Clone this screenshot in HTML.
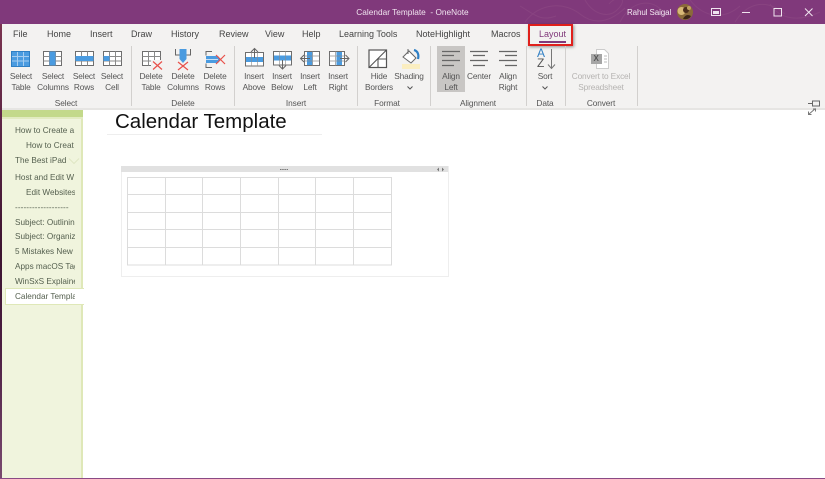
<!DOCTYPE html>
<html><head><meta charset="utf-8"><style>
html,body{margin:0;padding:0;background:#fff}
body{width:825px;height:479px;position:relative;overflow:hidden;font-family:"Liberation Sans",sans-serif;filter:blur(.3px)}
div{position:absolute;white-space:nowrap}
.tab{top:29px;font-size:9px;line-height:11px;color:#444}
.l{font-size:8.3px;letter-spacing:-.15px;line-height:11px;color:#555;text-align:center;width:50px;top:71px}
.g{font-size:8.3px;letter-spacing:-.1px;line-height:11px;color:#555;text-align:center;width:60px;top:98px}
.sep{top:46px;width:1px;height:60px;background:#d2d0ce}
.n{font-size:8.2px;line-height:11px;color:#55604f;left:15px;width:60px;overflow:hidden}
</style></head><body>
<div style="left:0;top:0;width:825px;height:24px;background:#80397b"></div>
<div style="left:0;top:24px;width:2px;height:455px;background:linear-gradient(#7a3450,#5a2444 25%,#3c1430 50%,#4a1c40 70%,#7a4a70)"></div>
<svg style="position:absolute;left:0;top:0" width="825" height="24" fill="none" stroke="#884380" stroke-width="1"><path d="M525 22C540 2 565 2 580 14S610 22 625 8M585 0c8 14 24 20 34 8s-4-12-10-4M520 6c14 8 20 16 36 10M620 22c12-24 36-24 46-6M690 0c14 18 34 20 50 6M735 22c14-22 34-22 50-8M770 4c10 16 30 18 50 8"/></svg>
<div style="left:300px;top:6px;width:225px;text-align:center;font-size:8.3px;line-height:12px;color:#f0e4ef">Calendar Template &nbsp;- OneNote</div>
<div style="left:627px;top:7px;font-size:8px;letter-spacing:-.1px;line-height:12px;color:#f3e9f2">Rahul Saigal</div>
<svg style="position:absolute;left:676px;top:3px" width="18" height="18"><circle cx="9" cy="9" r="8" fill="#8a6a3a"/><circle cx="5.500" cy="8" r="4" fill="#d8b878"/><circle cx="10" cy="7" r="3" fill="#4a2c1c"/><path d="M7 16q3-6 8-3-2 4-8 3z" fill="#3a2418"/><circle cx="13" cy="5" r="2" fill="#c0a060"/></svg>
<svg style="position:absolute;left:705px;top:3px" width="115" height="18" fill="none" stroke="#f0e4ef"><rect x="6.500" y="5.500" width="9" height="7"/><path d="M8 8h6v3H8z" fill="#f0e4ef" stroke="none"/><path d="M37 9.500h8"/><rect x="69" y="5.500" width="7.500" height="7.500"/><path d="M100 5.500l7.500 7.500M107.500 5.500l-7.500 7.500"/></svg>

<div style="left:2px;top:24px;width:823px;height:84px;background:#f3f2f1"></div>
<div style="left:2px;top:108px;width:823px;height:2px;background:#e6e5e3"></div>

<div class="tab" style="left:13px">File</div>
<div class="tab" style="left:47px">Home</div>
<div class="tab" style="left:90px">Insert</div>
<div class="tab" style="left:131px">Draw</div>
<div class="tab" style="left:171px">History</div>
<div class="tab" style="left:219px">Review</div>
<div class="tab" style="left:265px">View</div>
<div class="tab" style="left:302px">Help</div>
<div class="tab" style="left:339px">Learning Tools</div>
<div class="tab" style="left:416px">NoteHighlight</div>
<div class="tab" style="left:491px">Macros</div>
<div class="tab" style="left:539px;color:#80397b">Layout</div>
<div style="left:539px;top:41px;width:27px;height:1.500px;background:#80397b"></div>
<div style="left:528px;top:24px;width:41px;height:18px;border:2px solid #e0201c;box-shadow:1px 1px 3px rgba(0,0,0,.4)"></div>

<div style="left:437px;top:46px;width:28px;height:46px;background:#c8c6c4"></div>
<div class="sep" style="left:131px"></div><div class="sep" style="left:234px"></div><div class="sep" style="left:357px"></div><div class="sep" style="left:430px"></div><div class="sep" style="left:526px"></div><div class="sep" style="left:565px"></div><div class="sep" style="left:637px"></div>

<svg style="position:absolute;left:0;top:44px" width="825" height="30" viewBox="0 44 825 30" fill="none" stroke-width="1">
<defs><g id="gr"><rect x=".5" y=".5" width="18" height="14" fill="#fff" stroke="#6e6e6e"/><path d="M6.500 .5v14M12.500 .5v14M.5 5.500h18M.5 10h18" stroke="#8a8a8a"/></g></defs>
<!-- select -->
<rect x="11.500" y="51.500" width="18" height="15" fill="#4a9be0" stroke="#2f7fc4"/><path d="M17.500 52v14M23.500 52v14M12 56.500h17M12 61h17" stroke="#a6cdf0"/>
<use href="#gr" x="43" y="51"/><rect x="49.500" y="51.500" width="6" height="14" fill="#4a9be0"/>
<use href="#gr" x="75" y="51"/><rect x="75.500" y="56" width="18" height="5" fill="#4a9be0"/>
<use href="#gr" x="103" y="51"/><rect x="103.500" y="56" width="6" height="5" fill="#4a9be0"/>
<!-- delete -->
<use href="#gr" x="142" y="51"/><rect x="151" y="60" width="12" height="11" fill="#f3f2f1"/><path d="M153 61.500l9 8M162 61.500l-9 8" stroke="#e8504a" stroke-width="1.200"/>
<path d="M175.500 49v6h4M190.500 49v6h-4" stroke="#666"/><path d="M179.500 49h7v10l-3.500 4-3.500-4z" fill="#4a9be0"/><path d="M178 62l10 8M188 62l-10 8" stroke="#e8504a" stroke-width="1.200"/>
<path d="M212 51.500h-6v4M212 67.500h-6v-4" stroke="#666"/><path d="M206 56h12l3 3.500-3 3.500h-12z" fill="#4a9be0"/><rect x="206" y="59" width="12" height="1" fill="#c8e0f5"/><path d="M216 55l9 9M225 55l-9 9" stroke="#e8504a" stroke-width="1.200"/>
<!-- insert -->
<rect x="245.500" y="52.500" width="18" height="13.500" fill="#fff" stroke="#6e6e6e"/><rect x="246" y="57" width="17" height="5" fill="#4a9be0"/><path d="M251.500 52v14M257.500 52v14" stroke="#8a8a8a" stroke-opacity=".6"/><path d="M254.500 58V48.500M251 52l3.500-3.500 3.500 3.500" stroke="#666"/>
<rect x="273.500" y="51.500" width="18" height="13.500" fill="#fff" stroke="#6e6e6e"/><rect x="274" y="55.500" width="17" height="5" fill="#4a9be0"/><path d="M279.500 51v14M285.500 51v14" stroke="#8a8a8a" stroke-opacity=".6"/><path d="M282.500 60v9M279 65.500l3.500 3.500 3.500-3.500" stroke="#666"/>
<rect x="304.500" y="51.500" width="15" height="14" fill="#fff" stroke="#6e6e6e"/><rect x="307" y="52" width="5.500" height="13" fill="#4a9be0"/><path d="M312.500 51.500v14M304.500 56h15M304.500 61h15" stroke="#8a8a8a" stroke-opacity=".7"/><path d="M310 58.500h-9.500M304 55l-3.500 3.500 3.500 3.500" stroke="#666"/>
<rect x="329.500" y="51.500" width="15" height="14" fill="#fff" stroke="#6e6e6e"/><rect x="336.500" y="52" width="5.500" height="13" fill="#4a9be0"/><path d="M335.500 51.500v14M329.500 56h15M329.500 61h15" stroke="#8a8a8a" stroke-opacity=".7"/><path d="M340 58.500h9M345.500 55l3.500 3.500-3.500 3.500" stroke="#666"/>
<!-- format -->
<rect x="369" y="50" width="17.500" height="17.500" fill="#fff" stroke="#555" stroke-width="1.200"/><path d="M369 67.500L386.500 50M378 59v8.500M378 59h8.500" stroke="#555" stroke-width="1.100"/>
<rect x="402" y="64" width="18" height="5" fill="#fbeec0"/><path d="M403 57l6-6 7 7-5 5z" fill="#fff" stroke="#666"/><path d="M408 49v5" stroke="#666"/><path d="M414 50c4 1 5 5 4 9" stroke="#2f7fc4" stroke-width="2.200"/>
<!-- align -->
<path d="M442 51.500h18M442 55.500h12M442 60.500h18M442 65.500h12" stroke="#666" stroke-width="1.200"/>
<path d="M470 51.500h18M473 55.500h12M470 60.500h18M473 65.500h12" stroke="#666" stroke-width="1.200"/>
<path d="M499 51.500h18M505 55.500h12M499 60.500h18M505 65.500h12" stroke="#666" stroke-width="1.200"/>
<!-- sort -->
<path d="M551.500 49v19M548 64.500l3.500 4 3.500-4" stroke="#777"/>
<!-- convert -->
<path d="M596.500 49.500h8l4 4v15h-12z" fill="#fff" stroke="#ccc"/><rect x="591" y="54" width="11" height="10" fill="#a6a6a6"/><path d="M604 56h3M604 59h3M604 62h3" stroke="#bbb"/>
</svg>
<div style="left:537px;top:48px;font-size:12px;line-height:11px;color:#2f7fc4">A</div>
<div style="left:537px;top:58px;font-size:12px;line-height:11px;color:#555">Z</div>
<div style="left:593.500px;top:55px;font-size:8px;line-height:8px;color:#555;font-weight:bold">X</div>

<div class="l" style="left:-4px">Select<br>Table</div>
<div class="l" style="left:28px">Select<br>Columns</div>
<div class="l" style="left:59px">Select<br>Rows</div>
<div class="l" style="left:87px">Select<br>Cell</div>
<div class="l" style="left:126px">Delete<br>Table</div>
<div class="l" style="left:158px">Delete<br>Columns</div>
<div class="l" style="left:190px">Delete<br>Rows</div>
<div class="l" style="left:229px">Insert<br>Above</div>
<div class="l" style="left:257px">Insert<br>Below</div>
<div class="l" style="left:285px">Insert<br>Left</div>
<div class="l" style="left:313px">Insert<br>Right</div>
<div class="l" style="left:354px">Hide<br>Borders</div>
<div class="l" style="left:384px">Shading</div>
<svg style="position:absolute;left:405px;top:85px" width="10" height="6" fill="none" stroke="#555"><path d="M2.500 1.500L5 4l2.500-2.500"/></svg>
<div class="l" style="left:426px">Align<br>Left</div>
<div class="l" style="left:454px">Center</div>
<div class="l" style="left:483px">Align<br>Right</div>
<div class="l" style="left:520px">Sort</div>
<svg style="position:absolute;left:540px;top:85px" width="10" height="6" fill="none" stroke="#555"><path d="M2.500 1.500L5 4l2.500-2.500"/></svg>
<div class="l" style="left:561px;width:80px;color:#b5b3b1">Convert to Excel<br>Spreadsheet</div>

<div class="g" style="left:36px">Select</div>
<div class="g" style="left:153px">Delete</div>
<div class="g" style="left:266px">Insert</div>
<div class="g" style="left:357px">Format</div>
<div class="g" style="left:448px">Alignment</div>
<div class="g" style="left:515px">Data</div>
<div class="g" style="left:571px">Convert</div>
<svg style="position:absolute;left:806px;top:99px" width="16" height="18" fill="none" stroke="#666"><path d="M2 4.500h4M6.500 2v5h7V2z"/><path d="M9.500 9.500l-7 6M2.500 12.500v3h3M7 10h2.500v2.500" stroke="#777"/></svg>

<!-- sidebar -->
<div style="left:2px;top:110px;width:79px;height:369px;background:#f0f4dd;border-right:2px solid #dfe8b8"></div>
<div style="left:2px;top:110px;width:81px;height:7px;background:#c3d98a"></div>
<div style="left:2px;top:117px;width:81px;height:2px;background:#e2ebc0"></div>
<div style="left:5px;top:288px;height:15px;background:#fff;border:1px solid #dfe8b8;border-right:none;width:78px"></div>
<div class="n" style="top:125px">How to Create a</div>
<div class="n" style="top:140px;left:26px;width:49px">How to Creat</div>
<div class="n" style="top:155px">The Best iPad</div>
<svg style="position:absolute;left:68px;top:157px" width="12" height="8" fill="none" stroke="#dfe6c4"><path d="M1 1.500l5 5 5-5"/></svg>
<div class="n" style="top:172px">Host and Edit W</div>
<div class="n" style="top:187px;left:26px;width:49px">Edit Websites</div>
<div class="n" style="top:202px;letter-spacing:.1px">-------------------</div>
<div class="n" style="top:217px">Subject: Outlinin</div>
<div class="n" style="top:231px">Subject: Organiz</div>
<div class="n" style="top:246px">5 Mistakes New</div>
<div class="n" style="top:261px">Apps macOS Tag</div>
<div class="n" style="top:276px">WinSxS Explaine</div>
<div class="n" style="top:291px">Calendar Templa</div>

<!-- page -->
<div style="left:115px;top:109px;font-size:20.500px;line-height:26px;color:#111">Calendar Template</div>
<div style="left:107px;top:134px;width:215px;height:1px;background:#eee"></div>
<div style="left:121px;top:166px;width:326px;height:109px;border:1px solid #eee"></div>
<div style="left:121px;top:166px;width:327px;height:6px;background:#e1e1e1"></div>
<svg style="position:absolute;left:121px;top:166px" width="328" height="112"><path d="M159 3.500h8" stroke="#777" stroke-dasharray="1.500 .7"/><path d="M318 1.500v4l-2-2zM321 1.500v4l2-2z" fill="#777"/>
<g stroke="#dcdcdc" fill="none"><rect x="6.500" y="11.500" width="264" height="87.500"/><path d="M44.500 11.500v87.500M81.500 11.500v87.500M119.500 11.500v87.500M157.500 11.500v87.500M194.500 11.500v87.500M232.500 11.500v87.500M6.500 28.500h264M6.500 46.500h264M6.500 63.500h264M6.500 81.500h264"/></g></svg>
<div style="left:0;top:478px;width:825px;height:1px;background:#8a4a85"></div>
</body></html>
